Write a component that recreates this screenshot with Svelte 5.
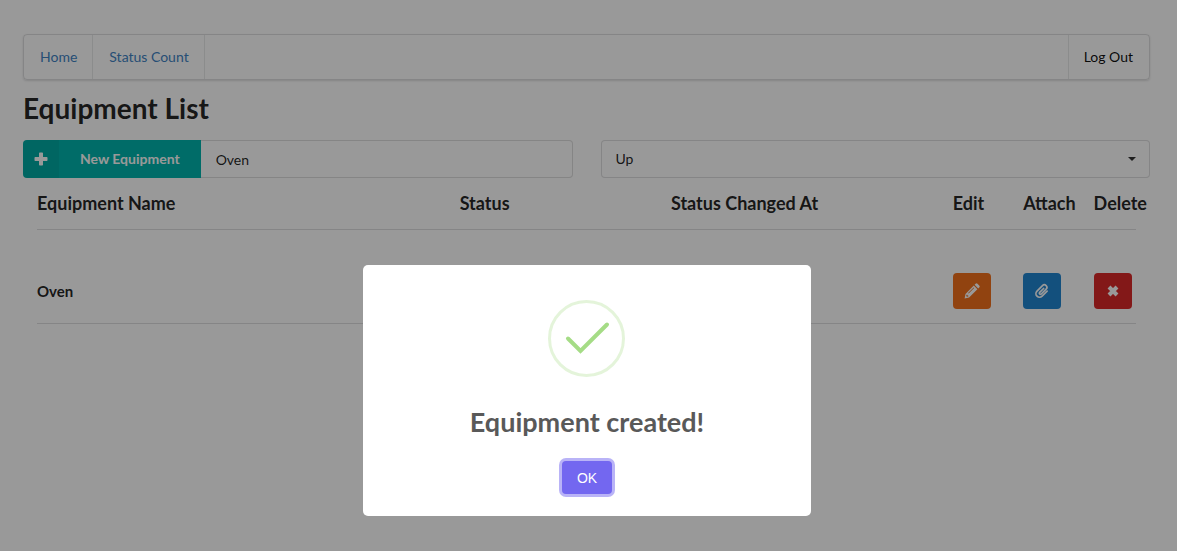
<script>
  let name = $state('Oven');
  let status = $state('Up');
  let open = $state(true);
  const equipment = [{ name: 'Oven' }];
</script>

<main>
  <nav aria-label="Main">
    <a href="#home">Home</a>
    <a href="#status-count">Status Count</a>
    <button type="button" class="logout">Log Out</button>
  </nav>

  <h1>Equipment List</h1>

  <form class="fields" onsubmit={(e) => e.preventDefault()}>
    <div class="action">
      <button type="submit" class="new">
        <span class="plus">
          <svg viewBox="0 0 14 14" width="14" height="14" aria-hidden="true">
            <path d="M5 1.300a.8.8 0 0 1 .8-.8h2.400a.8.8 0 0 1 .8.8V5h3.700a.8.8 0 0 1 .8.8v2.400a.8.8 0 0 1-.8.8H9v3.700a.8.8 0 0 1-.8.8H5.800a.8.8 0 0 1-.8-.8V9H1.300a.8.8 0 0 1-.8-.8V5.800a.8.8 0 0 1 .8-.8H5z" />
          </svg>
        </span>
        <span class="new-text">New Equipment</span>
      </button>
      <input type="text" aria-label="Equipment name" bind:value={name} />
    </div>
    <div class="dropdown">
      <select aria-label="Status" bind:value={status}>
        <option>Up</option>
        <option>Down</option>
      </select>
      <svg class="caret" viewBox="0 0 8 4" width="8" height="4" aria-hidden="true"><path d="M0 0h8L4 4z" /></svg>
    </div>
  </form>

  <table>
    <colgroup>
      <col class="w6" /><col class="w3" /><col class="w4" /><col class="w1" /><col class="w1" /><col class="w1" />
    </colgroup>
    <thead>
      <tr>
        <th>Equipment Name</th>
        <th>Status</th>
        <th>Status Changed At</th>
        <th>Edit</th>
        <th>Attach</th>
        <th>Delete</th>
      </tr>
    </thead>
    <tbody>
      {#each equipment as item}
        <tr>
          <td class="name">{item.name}</td>
          <td></td>
          <td></td>
          <td>
            <button type="button" class="icon orange" aria-label="Edit {item.name}">
              <svg viewBox="0 0 16 16" width="16" height="16" aria-hidden="true">
                <path fill-rule="evenodd" d="M9.800 2.600 13.400 6.200 5.100 14.500.6 15.400 1.500 10.900zM10.600 1.800l1-1a1.300 1.300 0 0 1 1.900 0l1.700 1.700a1.300 1.300 0 0 1 0 1.900l-1 1zM2.600 11.700l-.4 1.300.8.800 1.300-.4v-.8h-.9v-.9zM9.700 4.500 4.100 10.100l.5.5 5.600-5.600z" />
              </svg>
            </button>
          </td>
          <td>
            <button type="button" class="icon blue" aria-label="Attach to {item.name}">
              <svg viewBox="0 0 16 16" width="16" height="16" aria-hidden="true">
                <path class="clip" d="M9.600 5.500 5.700 9.400a1.100 1.100 0 0 0 1.600 1.600l4.800-4.800a2.500 2.500 0 0 0-3.600-3.600L3 8.100a3.600 3.600 0 0 0 5.100 5.100l5-5" />
              </svg>
            </button>
          </td>
          <td>
            <button type="button" class="icon red" aria-label="Delete {item.name}">
              <svg viewBox="0 0 16 16" width="16" height="16" aria-hidden="true">
                <path class="cross" d="M4 4l8 8M12 4l-8 8" />
              </svg>
            </button>
          </td>
        </tr>
      {/each}
    </tbody>
  </table>
</main>

{#if open}
  <div class="overlay">
    <div class="modal" role="dialog" aria-modal="true" aria-labelledby="modal-title">
      <svg class="success" viewBox="0 0 78 78" width="78" height="78" aria-hidden="true">
        <circle cx="38.500" cy="38.500" r="37" />
        <path d="M20 38.500 32.500 51 59 24.500" />
      </svg>
      <h2 id="modal-title">Equipment created!</h2>
      <button type="button" class="ok" onclick={() => (open = false)}>OK</button>
    </div>
  </div>
{/if}

<style>
  :global(body) {
    background: #fff;
    color: rgba(0, 0, 0, 0.87);
    font: 14px/20px Lato, sans-serif;
  }
  * {
    box-sizing: border-box;
  }
  button, input, select {
    font: inherit;
    color: inherit;
    margin: 0;
  }
  button {
    border: 0;
    cursor: pointer;
  }
  main {
    padding: 34px 27px 0 23px;
  }
  nav {
    display: flex;
    height: 46px;
    border: 1px solid rgba(34, 36, 38, 0.15);
    border-radius: 4px;
    box-shadow: 0 1px 2px rgba(34, 36, 38, 0.15);
  }
  nav a, .logout {
    display: flex;
    align-items: center;
    padding: 0 15px 0 16px;
    border-right: 1px solid rgba(34, 36, 38, 0.1);
    color: #4183c4;
    text-decoration: none;
  }
  .logout {
    margin-left: auto;
    padding: 0 16px 0 15px;
    border-right: 0;
    border-left: 1px solid rgba(34, 36, 38, 0.1);
    background: none;
    color: rgba(0, 0, 0, 0.95);
  }
  h1 {
    margin: 10px 0 14px;
    font-size: 28px;
    line-height: 36px;
    font-weight: 700;
  }
  .fields {
    display: grid;
    grid-template-columns: 1fr 1fr;
    gap: 28px;
  }
  .action {
    display: flex;
    height: 38px;
  }
  .new {
    display: flex;
    align-items: stretch;
    flex: none;
    padding: 0;
    border-radius: 4px 0 0 4px;
    overflow: hidden;
    background: #00b5ad;
    color: #fff;
    font-weight: 700;
  }
  .plus {
    display: flex;
    align-items: center;
    justify-content: center;
    width: 36px;
    background: rgba(0, 0, 0, 0.05);
  }
  .plus svg {
    fill: #fff;
  }
  .new-text {
    align-self: center;
    padding: 0 21px;
  }
  .action input {
    flex: 1;
    min-width: 0;
    padding: 2px 14px 0 15px;
    border: 1px solid rgba(34, 36, 38, 0.15);
    border-left: 0;
    border-radius: 0 4px 4px 0;
    background: #fff;
    outline: 0;
  }
  .dropdown {
    position: relative;
  }
  select {
    width: 100%;
    height: 38px;
    padding: 0 14px;
    border: 1px solid rgba(34, 36, 38, 0.15);
    border-radius: 4px;
    background: #fff;
    appearance: none;
  }
  .caret {
    position: absolute;
    right: 14px;
    top: 17px;
    fill: rgba(0, 0, 0, 0.8);
    pointer-events: none;
  }
  table {
    width: 100%;
    table-layout: fixed;
    border-collapse: collapse;
  }
  .w6 { width: 37.5%; }
  .w3 { width: 18.75%; }
  .w4 { width: 25%; }
  .w1 { width: 6.25%; }
  tr {
    position: relative;
  }
  tr::after {
    content: '';
    position: absolute;
    left: 14px;
    right: 14px;
    bottom: 0;
    height: 1px;
    background: rgba(34, 36, 38, 0.15);
  }
  th, td {
    padding: 0 0 0 14px;
    text-align: left;
    white-space: nowrap;
  }
  th {
    height: 52px;
    padding-bottom: 2px;
    font-size: 18px;
    line-height: 24px;
    font-weight: 700;
  }
  td {
    height: 94px;
    padding-top: 28px;
  }
  .name {
    font-size: 15px;
    font-weight: 700;
  }
  .icon {
    display: grid;
    place-items: center;
    width: 38px;
    height: 36px;
    padding: 0;
    border-radius: 4px;
  }
  .icon svg {
    fill: #fff;
  }
  .orange { background: #f2711c; }
  .blue { background: #2185d0; }
  .red { background: #db2828; }
  .icon .clip {
    fill: none;
    stroke: #fff;
    stroke-width: 1.7;
    stroke-linecap: round;
  }
  .icon .cross {
    stroke: #fff;
    stroke-width: 4;
  }
  .overlay {
    position: fixed;
    inset: 0;
    display: flex;
    align-items: flex-end;
    justify-content: center;
    padding: 0 3px 35px 0;
    background: rgba(0, 0, 0, 0.4);
  }
  .modal {
    display: flex;
    flex-direction: column;
    align-items: center;
    width: 448px;
    max-width: 100%;
    padding: 35px 18px 19px;
    border-radius: 5px;
    background: #fff;
  }
  .success {
    fill: none;
    stroke: #a5dc86;
  }
  .success circle {
    stroke: rgba(165, 220, 134, 0.3);
    stroke-width: 3;
  }
  .success path {
    stroke-width: 4;
    stroke-linecap: round;
  }
  h2 {
    margin: 27px 0 19px;
    color: #595959;
    font-size: 27px;
    line-height: 34px;
    font-weight: 700;
  }
  .ok {
    height: 33px;
    margin: 3px;
    padding: 0 15px;
    border-radius: 4px;
    background: #7367f0;
    box-shadow: 0 0 0 3px rgba(115, 103, 240, 0.5);
    color: #fff;
    font: 14px/20px "Liberation Sans", Arial, sans-serif;
  }
</style>
